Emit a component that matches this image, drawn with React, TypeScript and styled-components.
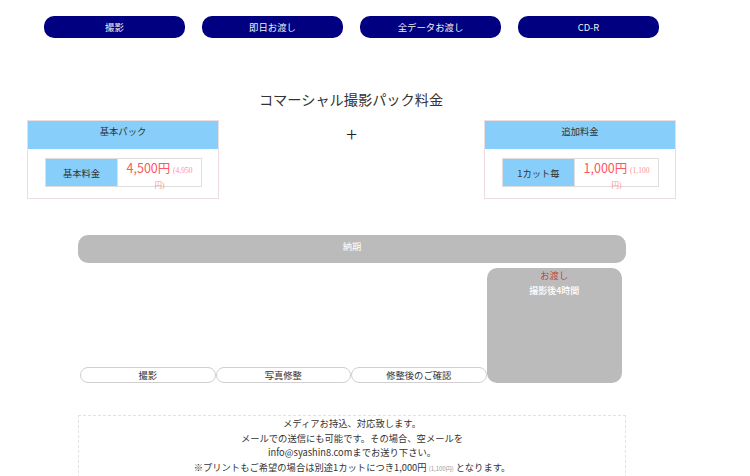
import React from "react";
import styled, { createGlobalStyle } from "styled-components";

const Global = createGlobalStyle`
  html, body { margin: 0; padding: 0; background: #fff; }
  body {
    font-family: "Noto Sans CJK JP", "Noto Sans", sans-serif;
    color: #333;
    width: 750px;
    overflow: hidden;
  }
`;

const Page = styled.div`
  width: 750px;
  height: 476px;
  overflow: hidden;
`;

const Nav = styled.nav`
  display: flex;
  gap: 17px;
  padding: 16px 0 0 44px;
`;

const NavButton = styled.a`
  width: 141px;
  height: 22px;
  border-radius: 10px;
  background: #000080;
  color: #f2f2f2;
  font-size: 9.4px;
  display: flex;
  align-items: center;
  justify-content: center;
  text-decoration: none;
`;

const Title = styled.h2`
  width: 702px;
  margin: 51px 0 0;
  font-weight: 400;
  font-size: 14.2px;
  line-height: 20px;
  text-align: center;
  color: #333;
`;

const PriceRow = styled.div`
  display: grid;
  grid-template-columns: 192px 1fr 192px;
  padding: 0 74px 0 27px;
  margin-top: 11px;
`;

const Plus = styled.div`
  text-align: center;
  font-size: 20px;
  line-height: 20px;
  margin-top: 4px;
  font-weight: 300;
  color: #222;
`;

const PriceBox = styled.div`
  border: 1px solid #ecdede;
  height: 79px;
  box-sizing: border-box;
`;

const BoxHeader = styled.div`
  background: #87cefa;
  height: 28px;
  box-sizing: border-box;
  padding-top: 3px;
  font-size: 9.3px;
  line-height: 15px;
  text-align: center;
  color: #333;
`;

const BoxBody = styled.div`
  padding: 9px 16px 0 17px;
`;

const PriceTable = styled.div`
  display: grid;
  grid-template-columns: 72px 1fr;
  grid-template-rows: 27px;
  border: 1px solid #dedede;
  height: 29px;
  box-sizing: border-box;
`;

const LabelCell = styled.div`
  background: #87cefa;
  border-right: 1px solid #dedede;
  display: flex;
  align-items: center;
  justify-content: center;
  font-size: 9.3px;
  color: #333;
`;

const ValueCell = styled.div`
  padding: 3px 5px 0;
  text-align: center;
  line-height: 12px;
  color: #ff5560;
  font-size: 12.5px;
`;

const TaxNote = styled.span`
  font-size: 7.5px;
  color: #ff8f8f;
  font-family: "Liberation Serif", "Noto Sans CJK JP", serif;
`;

const Schedule = styled.div`
  width: 548px;
  margin: 36px 0 0 78px;
`;

const Bar = styled.div`
  height: 28px;
  border-radius: 10px;
  background: #bbbbbb;
  color: #fff;
  text-align: center;
  font-size: 9.3px;
  line-height: 15px;
  padding-top: 4px;
  box-sizing: border-box;
`;

const Timeline = styled.div`
  display: grid;
  grid-template-columns: repeat(4, 1fr);
  align-items: end;
  padding: 0 4px 0 2px;
  margin-top: 5px;
`;

const Step = styled.div`
  height: 16px;
  border: 1px solid #d0d0d0;
  border-radius: 8px;
  box-sizing: border-box;
  display: flex;
  align-items: center;
  justify-content: center;
  font-size: 9.3px;
  color: #333;
`;

const Delivery = styled.div`
  height: 115px;
  border-radius: 10px;
  background: #bbbbbb;
  text-align: center;
  line-height: 15px;
  font-size: 9.3px;
`;

const DeliveryLabel = styled.div`
  color: #c9413b;
`;

const DeliveryTime = styled.div`
  color: #fff;
  font-weight: 500;
  font-size: 9px;
`;

const Notes = styled.div`
  width: 548px;
  box-sizing: border-box;
  margin: 32px 0 0 78px;
  border: 1px dashed #e2e2e2;
  text-align: center;
  font-size: 9.3px;
  line-height: 14.7px;
  color: #333;
`;

const SmallGray = styled.span`
  font-size: 6px;
  color: #999;
`;

const navItems = ["撮影", "即日お渡し", "全データお渡し", "CD-R"];
const steps = ["撮影", "写真修整", "修整後のご確認"];

export default function App() {
  return (
    <Page>
      <Global />
      <Nav>
        {navItems.map((n) => (
          <NavButton key={n}>{n}</NavButton>
        ))}
      </Nav>
      <Title>コマーシャル撮影パック料金</Title>
      <PriceRow>
        <PriceBox>
          <BoxHeader>基本パック</BoxHeader>
          <BoxBody>
            <PriceTable>
              <LabelCell>基本料金</LabelCell>
              <ValueCell>
                4,500円 <TaxNote>(4,950円)</TaxNote>
              </ValueCell>
            </PriceTable>
          </BoxBody>
        </PriceBox>
        <Plus>+</Plus>
        <PriceBox>
          <BoxHeader>追加料金</BoxHeader>
          <BoxBody>
            <PriceTable>
              <LabelCell>1カット毎</LabelCell>
              <ValueCell>
                1,000円 <TaxNote>(1,100円)</TaxNote>
              </ValueCell>
            </PriceTable>
          </BoxBody>
        </PriceBox>
      </PriceRow>
      <Schedule>
        <Bar>納期</Bar>
        <Timeline>
          {steps.map((s) => (
            <Step key={s}>{s}</Step>
          ))}
          <Delivery>
            <DeliveryLabel>お渡し</DeliveryLabel>
            <DeliveryTime>撮影後4時間</DeliveryTime>
          </Delivery>
        </Timeline>
      </Schedule>
      <Notes>
        メディアお持込、対応致します。
        <br />
        メールでの送信にも可能です。その場合、空メールを
        <br />
        info@syashin8.comまでお送り下さい。
        <br />
        ※プリントもご希望の場合は別途1カットにつき1,000円 <SmallGray>(1,100円)</SmallGray> となります。
      </Notes>
    </Page>
  );
}
